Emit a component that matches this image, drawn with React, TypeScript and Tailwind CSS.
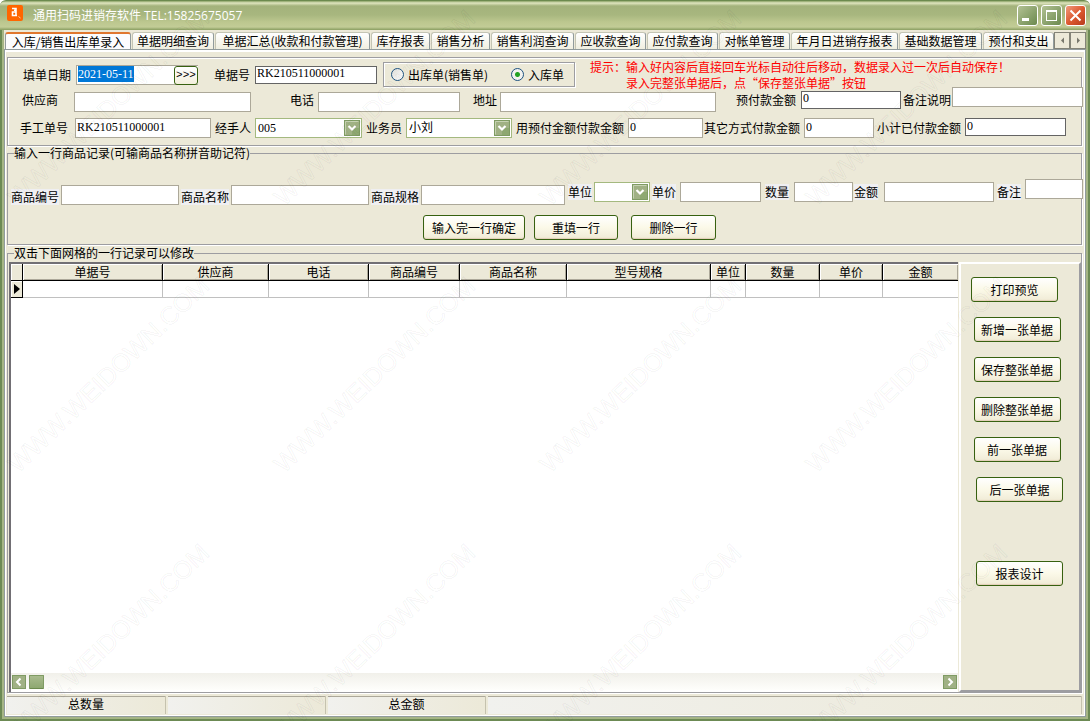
import { useEffect, useRef, useState } from "react";
import type { ReactNode } from "react";
import clsx from "clsx";

const TABS = [
  { label: "入库/销售出库单录入", width: "w-[126px]" },
  { label: "单据明细查询", width: "w-[82px]" },
  { label: "单据汇总(收款和付款管理)", width: "w-[155px]" },
  { label: "库存报表", width: "w-[59px]" },
  { label: "销售分析", width: "w-[59px]" },
  { label: "销售利润查询", width: "w-[83px]" },
  { label: "应收款查询", width: "w-[71px]" },
  { label: "应付款查询", width: "w-[71px]" },
  { label: "对帐单管理", width: "w-[71px]" },
  { label: "年月日进销存报表", width: "w-[107px]" },
  { label: "基础数据管理", width: "w-[83px]" },
  { label: "预付和支出", width: "w-[71px]" },
];

const COLUMNS = [
  { label: "单据号", width: "w-[140px]" },
  { label: "供应商", width: "w-[106px]" },
  { label: "电话", width: "w-[100px]" },
  { label: "商品编号", width: "w-[91px]" },
  { label: "商品名称", width: "w-[107px]" },
  { label: "型号规格", width: "w-[144px]" },
  { label: "单位", width: "w-[35px]" },
  { label: "数量", width: "w-[74px]" },
  { label: "单价", width: "w-[63px]" },
  { label: "金额", width: "" },
];

const INPUT_FONT = "font-['Liberation_Serif','Noto_Sans_CJK_SC',serif]";
const ETCHED = "border border-[#9d9da1] shadow-[1px_1px_0_#fff,inset_1px_1px_0_#fff]";

interface FieldProps {
  id: string;
  label: string;
  value?: string;
  labelClass?: string;
  className?: string;
  dark?: boolean;
}

function Field({ id, label, value = "", labelClass, className, dark }: FieldProps) {
  return (
    <>
      <label htmlFor={id} className={clsx("shrink-0 whitespace-nowrap leading-4", labelClass)}>
        {label}
      </label>
      <input
        id={id}
        defaultValue={value}
        className={clsx(
          "border bg-white px-px pb-0.5 text-xs leading-4 outline-none",
          INPUT_FONT,
          dark ? "h-[18px] border-[#646464]" : "h-5 border-[#aca899]",
          className,
        )}
      />
    </>
  );
}

function SelectField({ id, label, value = "", labelClass, className }: FieldProps) {
  return (
    <>
      <label htmlFor={id} className={clsx("shrink-0 whitespace-nowrap leading-4", labelClass)}>
        {label}
      </label>
      <div className={clsx("relative h-5 shrink-0", className)}>
        <select
          id={id}
          defaultValue={value}
          className={clsx(
            "block h-full w-full appearance-none border border-[#a4b97f] bg-white pl-0.5 pb-px text-xs leading-4 outline-none",
            INPUT_FONT,
          )}
        >
          <option value={value}>{value}</option>
        </select>
        <svg className="pointer-events-none absolute right-0.5 top-0.5 size-4" viewBox="0 0 16 16" aria-hidden="true">
          <rect x="0.5" y="0.5" width="15" height="15" fill="#a0b184" stroke="#7f9b63" />
          <path d="M1.5 14.5v-13h13" fill="none" stroke="#c6d2b2" />
          <rect x="8" y="8" width="7" height="7" fill="#8ea871" />
          <path d="M4.5 6l3.5 3.5L11.5 6" fill="none" stroke="#fff" strokeWidth="2.2" />
        </svg>
      </div>
    </>
  );
}

function PushButton({ className, children }: { className?: string; children: ReactNode }) {
  return (
    <button
      type="button"
      className={clsx(
        "h-[25px] shrink-0 whitespace-nowrap rounded-[3px] border border-[#376110] bg-gradient-to-b from-white via-[#fbf9e8] to-[#f0ebd6] text-xs leading-4 shadow-[inset_0_-1px_1px_#e3cfb9]",
        className,
      )}
    >
      {children}
    </button>
  );
}

function TypeRadio({ label, checked, onChange, className }: { label: string; checked: boolean; onChange: () => void; className?: string }) {
  return (
    <label className={clsx("flex items-center gap-1 whitespace-nowrap", className)}>
      <input
        type="radio"
        name="orderType"
        checked={checked}
        onChange={onChange}
        className="size-[13px] appearance-none rounded-full border border-[#1d5281] bg-gradient-to-br from-[#dcdcd7] to-white checked:bg-[radial-gradient(circle,#21a121_0_2px,#f2f2ef_3px)]"
      />
      {label}
    </label>
  );
}

function Watermark() {
  return (
    <svg className="pointer-events-none absolute inset-0 h-full w-full" aria-hidden="true">
      {[207, 474, 741].map((y) =>
        [18, 284, 550, 816].map((x) => (
          <text
            key={`${x}-${y}`}
            x={x}
            y={y}
            transform={`rotate(-44 ${x} ${y})`}
            className="fill-none stroke-black/5 font-['Liberation_Sans',sans-serif] text-[25px]"
          >
            WWW.WEIDOWN.COM
          </text>
        )),
      )}
    </svg>
  );
}

function TitleBar() {
  const control = "grid size-[21px] place-items-center rounded-[3px] border border-white";
  return (
    <header className="flex h-[30px] shrink-0 items-center rounded-t-md border-t border-[#6c8a4e] bg-[linear-gradient(#8ba266_0,#e0e6c0_2px,#a3b27b_5px,#a8b77f_14px,#bcc78f_21px,#c2cc96_26px,#9bac72_28px,#8b9f61)] pl-[7px] pr-1">
      <svg className="mb-1.5 size-4" viewBox="0 0 16 16" aria-hidden="true">
        <rect width="16" height="16" rx="2" fill="#f60" />
        <path d="M5 3.5h4v7M9 7H5.5v3.5H10M7 5.2h2" fill="none" stroke="#fff" strokeWidth="1.6" />
        <path d="M11.5 11.5l2 1.5" stroke="#ffd0a8" />
      </svg>
      <h1 className="ml-2.5 flex-1 font-['Open_Sans','Noto_Sans_CJK_SC',sans-serif] text-xs text-white">
        通用扫码进销存软件 TEL:15825675057
      </h1>
      <div className="flex gap-[3px]">
        <button type="button" aria-label="最小化" className={clsx(control, "bg-gradient-to-br from-[#b3c294] to-[#6c8a4e]")}>
          <svg className="size-[15px]" viewBox="0 0 15 15">
            <path d="M2 11.5h7" stroke="#fff" strokeWidth="3" />
          </svg>
        </button>
        <button type="button" aria-label="最大化" className={clsx(control, "bg-gradient-to-br from-[#b3c294] to-[#6c8a4e]")}>
          <svg className="size-[15px]" viewBox="0 0 15 15">
            <rect x="2.5" y="2.5" width="10" height="10" fill="none" stroke="#fff" />
            <path d="M2 3h11" stroke="#fff" strokeWidth="2" />
          </svg>
        </button>
        <button type="button" aria-label="关闭" className={clsx(control, "bg-gradient-to-br from-[#ef9a7c] via-[#dd5930] to-[#b83c1c]")}>
          <svg className="size-[15px]" viewBox="0 0 15 15">
            <path d="M2.5 2.5l10 10M12.5 2.5l-10 10" stroke="#fff" strokeWidth="2" />
          </svg>
        </button>
      </div>
    </header>
  );
}

function TabBar() {
  const [active, setActive] = useState(0);
  return (
    <nav className="flex h-[17px] shrink-0 items-stretch pl-px">
      <div role="tablist" className="flex min-w-0 flex-1 gap-px overflow-hidden">
        {TABS.map((tab, i) => (
          <button
            key={tab.label}
            type="button"
            role="tab"
            aria-selected={i === active}
            onClick={() => setActive(i)}
            className={clsx(
              "shrink-0 whitespace-nowrap rounded-t-[3px] border-x text-xs leading-4",
              tab.width,
              i === active
                ? "border-t-2 border-x-[#919b9c] border-t-[#e0772f] bg-[#fcfcfe] pb-0.5"
                : "border-t border-[#c4c5b4] border-r-[#919b9c] bg-gradient-to-b from-white to-[#f0efe0] pb-0.5",
            )}
          >
            {tab.label}
          </button>
        ))}
      </div>
      <div className="flex">
        <button type="button" aria-label="向左滚动" className="grid w-4 place-items-center border border-[#848478]">
          <svg className="size-[7px]" viewBox="0 0 7 7"><path d="M5 0.5v6l-3-3z" fill="#77776c" /></svg>
        </button>
        <button type="button" aria-label="向右滚动" className="grid w-4 place-items-center border border-[#848478]">
          <svg className="size-[7px]" viewBox="0 0 7 7"><path d="M2 0.5v6l3-3z" fill="#77776c" /></svg>
        </button>
      </div>
    </nav>
  );
}

function OrderForm() {
  const dateRef = useRef<HTMLInputElement>(null);
  const [type, setType] = useState("in");

  useEffect(() => {
    dateRef.current?.focus();
    dateRef.current?.select();
  }, []);

  return (
    <section className={clsx("pt-1 pb-[7px]", ETCHED)}>
      <div className="flex h-[25px] items-center">
        <label htmlFor="orderDate" className="ml-[15px] shrink-0">填单日期</label>
        <div className="ml-[5px] flex h-5 w-[122px] shrink-0 border border-r-0 border-[#aca899] bg-white">
          <input
            id="orderDate"
            ref={dateRef}
            defaultValue="2021-05-11"
            className={clsx(
              "h-4 min-w-0 flex-1 px-px text-xs leading-4 caret-transparent outline-none selection:bg-[#0078d7] selection:text-white",
              INPUT_FONT,
            )}
          />
          <button
            type="button"
            aria-label="选择日期"
            className="h-[19px] w-6 rounded-[3px] border border-[#376110] bg-gradient-to-b from-white to-[#f3efdc] font-['Liberation_Mono',monospace] text-[11px] leading-4"
          >
            &gt;&gt;&gt;
          </button>
        </div>
        <Field id="orderNo" label="单据号" value="RK210511000001" labelClass="ml-4" className="ml-[5px] w-[122px]" dark />
        <div role="radiogroup" aria-label="单据类型" className={clsx("ml-1.5 flex h-[25px] w-[192px] shrink-0 items-center pl-[7px]", ETCHED)}>
          <TypeRadio label="出库单(销售单)" checked={type === "out"} onChange={() => setType("out")} className="w-[120px]" />
          <TypeRadio label="入库单" checked={type === "in"} onChange={() => setType("in")} />
        </div>
        <p className="ml-[15px] shrink-0 whitespace-pre leading-4 text-[#f00]">
          提示：输入好内容后直接回车光标自动往后移动，数据录入过一次后自动保存！
          <span className="block pl-9">录入完整张单据后，点“保存整张单据”按钮</span>
        </p>
      </div>

      <div className="flex h-[25px] items-end">
        <Field id="supplier" label="供应商" labelClass="ml-3.5 self-center" className="ml-4 w-[177px]" />
        <Field id="phone" label="电话" labelClass="ml-[39px] self-center" className="ml-1 w-[142px]" />
        <Field id="address" label="地址" labelClass="ml-[13px] self-center" className="ml-[3px] w-[216px]" />
        <Field id="prepaid" label="预付款金额" value="0" labelClass="ml-5 self-center" className="ml-[5px] w-[100px] self-center" dark />
        <Field id="remark" label="备注说明" labelClass="ml-0.5 self-center" className="-mr-0.5 ml-px min-w-0 flex-1 self-start" />
      </div>

      <div className="mt-1.5 flex h-5 items-center">
        <Field id="manualNo" label="手工单号" value="RK210511000001" labelClass="ml-3" className="ml-[7px] w-[136px]" />
        <SelectField id="handler" label="经手人" value="005" labelClass="ml-1" className="ml-1 w-[107px]" />
        <SelectField id="salesman" label="业务员" value="小刘" labelClass="ml-1" className="ml-1 w-[106px]" />
        <Field id="payPrepaid" label="用预付金额付款金额" value="0" labelClass="ml-1" className="ml-1 w-[75px]" />
        <Field id="payOther" label="其它方式付款金额" value="0" labelClass="ml-px" className="ml-1 w-[70px]" />
        <Field id="paidTotal" label="小计已付款金额" value="0" labelClass="ml-[3px]" className="ml-1 w-[101px] self-start" dark />
      </div>
    </section>
  );
}

function ItemForm() {
  const tint = "bg-[#efeff2]";
  return (
    <fieldset className="min-w-0 border border-[#9d9da1] pb-1 shadow-[1px_1px_0_#fff]">
      <legend className="ml-1.5 leading-3">输入一行商品记录(可输商品名称拼音助记符)</legend>
      <div className="mt-5 flex h-[26px] items-end">
        <Field id="itemNo" label="商品编号" labelClass={clsx("ml-[3px]", tint)} className="ml-0.5 w-[118px]" />
        <Field id="itemName" label="商品名称" labelClass={clsx("ml-0.5", tint)} className="ml-0.5 w-[138px]" />
        <Field id="itemSpec" label="商品规格" labelClass={clsx("ml-0.5", tint)} className="ml-0.5 w-[144px]" />
        <SelectField id="unit" label="单位" labelClass={clsx("ml-[3px] self-center", tint)} className="ml-0.5 w-14 self-center" />
        <Field id="price" label="单价" labelClass={clsx("ml-0.5 self-center", tint)} className="ml-1 w-[81px] self-center" />
        <Field id="quantity" label="数量" labelClass={clsx("ml-1 self-center", tint)} className="ml-[5px] w-[59px] self-center" />
        <Field id="amount" label="金额" labelClass={clsx("ml-px self-center", tint)} className="ml-1.5 w-[110px] self-center" />
        <Field id="itemRemark" label="备注" labelClass={clsx("ml-[3px] self-center", tint)} className="-mr-0.5 ml-1 min-w-0 flex-1 self-start" />
      </div>
      <div className="mt-2.5 flex pl-[415px]">
        <PushButton className="w-[102px]">输入完一行确定</PushButton>
        <PushButton className="ml-[9px] w-[84px]">重填一行</PushButton>
        <PushButton className="ml-[13px] w-[85px]">删除一行</PushButton>
      </div>
    </fieldset>
  );
}

function ItemGrid() {
  return (
    <div className="flex min-w-0 flex-1 flex-col border-l-2 border-t-2 border-l-[#716f74] border-t-[#716f74] bg-white pb-0.5">
      <table className="w-full table-fixed border-separate border-spacing-0">
        <thead>
          <tr>
            <th className="h-[17px] w-3 border-b border-r border-black bg-[#ece9d8] shadow-[inset_1px_1px_0_#fff]" />
            {COLUMNS.map((col) => (
              <th
                key={col.label}
                scope="col"
                className={clsx(
                  "h-[17px] border-b border-r border-black bg-[#ece9d8] p-0 text-xs leading-4 font-normal shadow-[inset_1px_1px_0_#fff,inset_-1px_-1px_0_#aca899] last:border-r-0",
                  col.width,
                )}
              >
                {col.label}
              </th>
            ))}
          </tr>
        </thead>
        <tbody>
          <tr>
            <td className="h-[17px] border-b border-r border-black bg-[#ece9d8] p-0 shadow-[inset_1px_1px_0_#fff]">
              <svg className="ml-0.5 h-3 w-2" viewBox="0 0 8 12" aria-label="当前行">
                <path d="M1 1v10l6-5z" fill="#000" />
              </svg>
            </td>
            {COLUMNS.map((col) => (
              <td key={col.label} className="h-[17px] border-b border-r border-[#c0c0c0] p-0 last:border-r-0" />
            ))}
          </tr>
        </tbody>
      </table>
      <div className="flex-1" />
      <div className="flex h-[17px] shrink-0 items-center gap-[3px] bg-gradient-to-b from-[#f1f0ea] to-[#fefefb] px-px">
        <button type="button" aria-label="向左" className="size-[14px] border border-[#7f9b63] bg-[#a0b184] text-white">
          <svg className="size-3" viewBox="0 0 12 12"><path d="M7.5 2.5L4 6l3.5 3.5" fill="none" stroke="#fff" strokeWidth="2" /></svg>
        </button>
        <div className="h-[14px] w-[15px] rounded-[1px] border border-[#7f9b63] border-b-[#6c8a4e] bg-gradient-to-b from-[#a9bb8e] to-[#8ea871]" />
        <button type="button" aria-label="向右" className="ml-auto size-[14px] border border-[#7f9b63] bg-[#a0b184] text-white">
          <svg className="size-3" viewBox="0 0 12 12"><path d="M4.5 2.5L8 6 4.5 9.5" fill="none" stroke="#fff" strokeWidth="2" /></svg>
        </button>
      </div>
    </div>
  );
}

function OrderGrid() {
  return (
    <fieldset className="flex min-h-0 min-w-0 flex-1 border border-[#9d9da1] shadow-[1px_1px_0_#fff]">
      <legend className="ml-1.5 leading-3">双击下面网格的一行记录可以修改</legend>
      <div className="mt-[3px] ml-px flex min-w-0 flex-1">
        <ItemGrid />
        <aside className="ml-px flex w-[122px] shrink-0 flex-col gap-[15px] border-2 border-r-[#9d9da1] border-b-[#9d9da1] border-l-white border-t-white pl-2.5 pr-4 pt-[13px]">
          <PushButton className="w-[87px] self-start">打印预览</PushButton>
          <PushButton className="w-[87px] self-center">新增一张单据</PushButton>
          <PushButton className="w-[87px] self-center">保存整张单据</PushButton>
          <PushButton className="w-[87px] self-center">删除整张单据</PushButton>
          <PushButton className="w-[87px] self-center">前一张单据</PushButton>
          <PushButton className="w-[87px] self-end">后一张单据</PushButton>
          <PushButton className="mt-11 w-[87px] self-end">报表设计</PushButton>
        </aside>
      </div>
    </fieldset>
  );
}

function StatusBar() {
  const cell =
    "border-r border-[#c5c2ae] bg-gradient-to-r from-[#f1f1ee] to-[#ece9d8] text-center leading-4 shadow-[inset_0_1px_0_#aca899]";
  return (
    <footer className="mt-[3px] flex h-[18px] shrink-0 gap-0.5">
      <div className={clsx(cell, "w-[159px]")}>总数量</div>
      <div className={clsx(cell, "w-[158px]")} />
      <div className={clsx(cell, "w-[158px]")}>总金额</div>
      <div className={clsx(cell, "flex-1")} />
    </footer>
  );
}

export default function App() {
  return (
    <div className="relative flex h-screen flex-col overflow-hidden bg-white font-['Noto_Sans_CJK_SC',sans-serif] text-xs text-black">
      <TitleBar />
      <div className="flex min-h-0 flex-1 flex-col border-x-2 border-b-2 border-[#6c8a54]">
        <div className="flex min-h-0 flex-1 flex-col border-x-2 border-b-2 border-[#a5b585] bg-[#ece9d8] pt-0.5">
          <TabBar />
          <main className="flex min-h-0 flex-1 flex-col border border-[#919b9c] pr-[3px] pb-0.5 pl-0.5 shadow-[inset_1px_2px_0_#fff,inset_-1px_-1px_0_#fff]">
            <div className="flex min-h-0 flex-1 flex-col pt-[7px]">
              <OrderForm />
              <div className="mt-px flex min-h-0 flex-1 flex-col gap-0.5">
                <ItemForm />
                <OrderGrid />
              </div>
            </div>
            <StatusBar />
          </main>
        </div>
      </div>
      <Watermark />
    </div>
  );
}
